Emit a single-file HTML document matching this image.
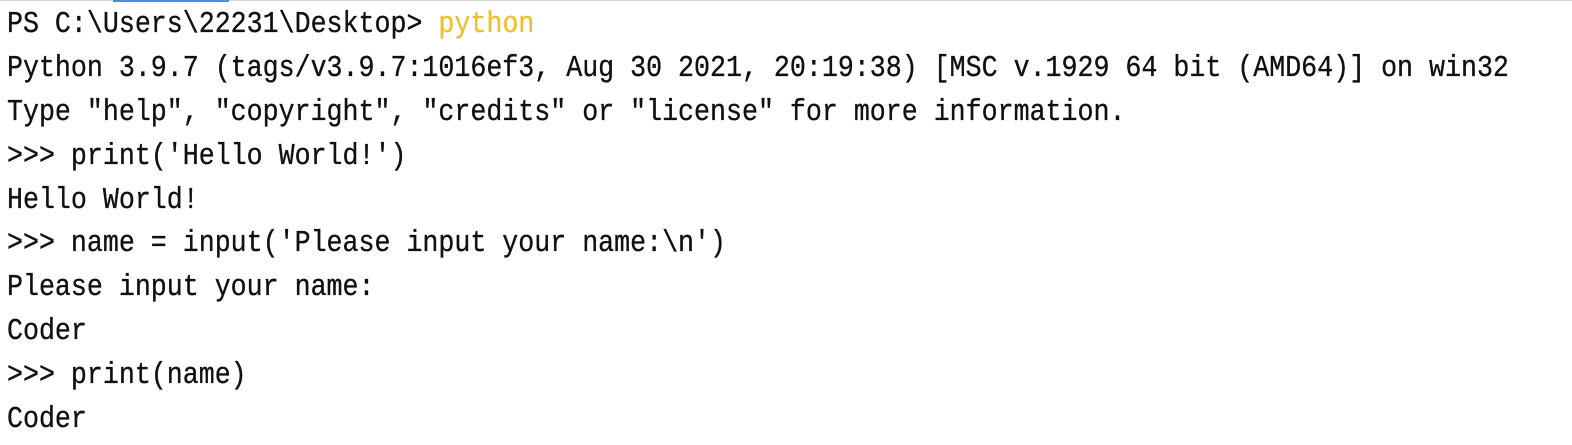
<!DOCTYPE html>
<html><head><meta charset="utf-8"><style>
html,body{margin:0;padding:0;background:#fff;width:1572px;height:437px;overflow:hidden}
.top{position:absolute;left:0;top:0;width:1572px;height:1px;background:#d8d8d8}
.blue{position:absolute;left:113px;top:0;width:116px;height:2px;background:#4a8be8}
.t{position:absolute;left:7px;top:4px;font-family:"Liberation Mono",monospace;font-size:26.63px;color:#111}
.l{height:43.9px;line-height:43.9px;white-space:pre;transform:scaleY(1.15);transform-origin:0 29px;-webkit-text-stroke:0.3px #111}
.y{color:#f0c02c;-webkit-text-stroke:0.3px #f0c02c}
</style></head><body>
<div class="top"></div><div class="blue"></div>
<div class="t">
<div class="l">PS C:\Users\22231\Desktop&gt; <span class="y">python</span></div>
<div class="l">Python 3.9.7 (tags/v3.9.7:1016ef3, Aug 30 2021, 20:19:38) [MSC v.1929 64 bit (AMD64)] on win32</div>
<div class="l">Type "help", "copyright", "credits" or "license" for more information.</div>
<div class="l">&gt;&gt;&gt; print('Hello World!')</div>
<div class="l">Hello World!</div>
<div class="l">&gt;&gt;&gt; name = input('Please input your name:\n')</div>
<div class="l">Please input your name:</div>
<div class="l">Coder</div>
<div class="l">&gt;&gt;&gt; print(name)</div>
<div class="l">Coder</div>
</div>
</body></html>
